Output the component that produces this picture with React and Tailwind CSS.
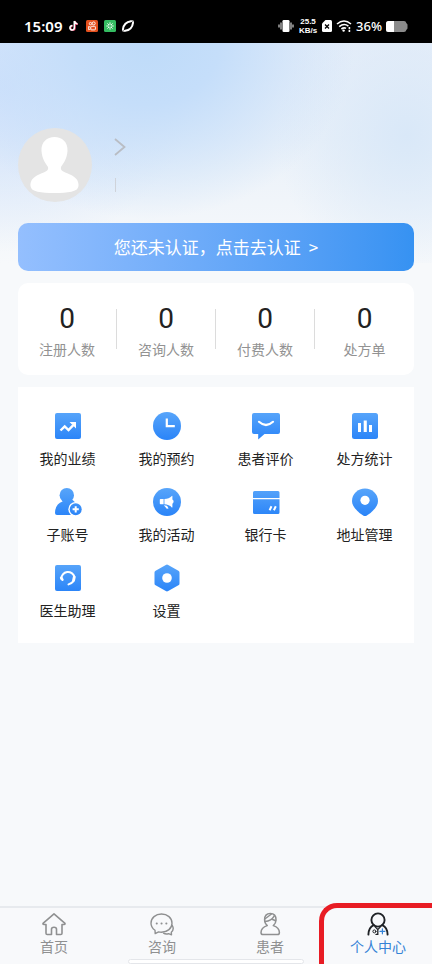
import { useState } from "react"

const stats = [
    { label: "注册人数", value: 0 },
    { label: "咨询人数", value: 0 },
    { label: "付费人数", value: 0 },
    { label: "处方单", value: 0 },
]

const menu = [
    { label: "我的业绩", icon: PerformanceIcon },
    { label: "我的预约", icon: ClockIcon },
    { label: "患者评价", icon: ReviewIcon },
    { label: "处方统计", icon: ChartIcon },
    { label: "子账号", icon: SubAccountIcon },
    { label: "我的活动", icon: ActivityIcon },
    { label: "银行卡", icon: CardIcon },
    { label: "地址管理", icon: PinIcon },
    { label: "医生助理", icon: AssistantIcon },
    { label: "设置", icon: SettingsIcon },
]

const tabs = [
    { label: "首页", icon: HomeIcon },
    { label: "咨询", icon: ChatIcon },
    { label: "患者", icon: PatientIcon },
    { label: "个人中心", icon: DoctorIcon },
]

// shared 28x28 frame with the blue fill used by all menu icons
function MenuSvg({ id, children }){
    return (
        <svg className="w-7 h-7" viewBox="0 0 28 28" fill={`url(#${id})`} aria-hidden="true">
            <defs>
                <linearGradient id={id} gradientUnits="userSpaceOnUse" x1="0" y1="0" x2="0" y2="28">
                    <stop offset="0" stopColor="#58a5fa" />
                    <stop offset="1" stopColor="#2a84f8" />
                </linearGradient>
            </defs>
            {children}
        </svg>
    )
}

function PerformanceIcon(){
    return (
        <MenuSvg id="performance">
            <rect x="1" y="1" width="26" height="26" rx="2" />
            <path d="M6.5 18.5L10.7 14.4L14.5 18L20 12.3" fill="none" stroke="#fff" strokeWidth="2.4" />
            <path d="M15.5 10H22V16.5L19.6 14V12.4H18Z" fill="#fff" />
        </MenuSvg>
    )
}

function ClockIcon(){
    return (
        <MenuSvg id="clock">
            <circle cx="14" cy="14" r="14" />
            <path d="M13.8 6.5V14.2H21.8" fill="none" stroke="#fff" strokeWidth="2.2" />
        </MenuSvg>
    )
}

function ReviewIcon(){
    return (
        <MenuSvg id="review">
            <path d="M2 1H26A2 2 0 0 1 28 3V20A2 2 0 0 1 26 22H12.5L6.2 27.5V22H2A2 2 0 0 1 0 20V3A2 2 0 0 1 2 1Z" />
            <path d="M7 9.8Q14 16.2 21 9.8" fill="none" stroke="#fff" strokeWidth="2.2" strokeLinecap="round" />
        </MenuSvg>
    )
}

function ChartIcon(){
    return (
        <MenuSvg id="chart">
            <rect x="1" y="1" width="26" height="26" rx="2.5" />
            <path d="M7 11H10V20H7ZM12.7 8.5H15.8V20H12.7ZM18 13H21V20H18Z" fill="#fff" />
        </MenuSvg>
    )
}

function SubAccountIcon(){
    return (
        <MenuSvg id="sub-account">
            <circle cx="12.8" cy="7.2" r="7.2" />
            <path d="M8 11H17.6C21 14 24 17 24 22V27H3Q1 27 1 25C1 19 4 15 8.5 13.5Z" />
            <circle cx="21.7" cy="21.3" r="7.4" fill="#fff" />
            <circle cx="21.7" cy="21.3" r="6" />
            <path d="M21.7 18.2V24.4M18.6 21.3H24.8" stroke="#fff" strokeWidth="2" />
        </MenuSvg>
    )
}

function ActivityIcon(){
    return (
        <MenuSvg id="activity">
            <circle cx="14" cy="14" r="14" />
            <path d="M7.5 11H10.6V16.3H7.5Q6.8 16.3 6.8 15.6V11.7Q6.8 11 7.5 11Z" fill="#fff" />
            <path d="M11.4 11C14.5 11 17 9.7 18.8 7.9Q19.4 7.5 19.4 8.3V11.6Q20.6 12.2 20.6 13.6T19.4 15.8V19Q19.4 19.8 18.8 19.4C17 17.6 14.5 16.3 11.4 16.3Z" fill="#fff" />
            <path d="M10.8 17.3L14 17.8L15.6 20.4L13.8 20.8Z" fill="#fff" />
        </MenuSvg>
    )
}

function CardIcon(){
    return (
        <MenuSvg id="card">
            <path d="M2.5 3H26Q27.5 3 27.5 4.5V10H1V4.5Q1 3 2.5 3ZM1 11.3H27.5V24.5Q27.5 26 26 26H2.5Q1 26 1 24.5Z" />
            <path d="M19.5 18.3L17.6 22.3M23.8 18.3L21.9 22.3" stroke="#fff" strokeWidth="2" />
        </MenuSvg>
    )
}

function PinIcon(){
    return (
        <MenuSvg id="pin">
            <path d="M14 0.5C6.8 0.5 1 6 1 13C1 18 4.8 21.6 8.500 25L12.5 27.8Q14 28.4 15.5 27.8L19.500 25C23.200 21.6 27 18 27 13C27 6 21.2 0.5 14 0.5Z" />
            <circle cx="14" cy="12.3" r="4.6" fill="#fff" />
        </MenuSvg>
    )
}

function AssistantIcon(){
    return (
        <MenuSvg id="assistant">
            <rect x="1" y="1" width="26" height="26" rx="2" />
            <path d="M7.3 14.8A6.7 6.7 0 0 1 20.5 13Q20.8 18.5 14.5 20.4" fill="none" stroke="#fff" strokeWidth="2" strokeLinecap="round" />
            <path d="M7.2 13.8L8.4 15.6M20.2 12.8L19.4 16.6" stroke="#fff" strokeWidth="2.6" strokeLinecap="round" />
        </MenuSvg>
    )
}

function SettingsIcon(){
    return (
        <MenuSvg id="settings">
            <path d="M12.8 0.9Q14 0.2 15.2 0.9L25.4 6.7Q26.5 7.3 26.5 8.6V19.4Q26.5 20.7 25.4 21.3L15.2 27.1Q14 27.8 12.8 27.1L2.6 21.3Q1.5 20.7 1.5 19.4V8.6Q1.5 7.3 2.6 6.7Z" />
            <circle cx="14" cy="14" r="4.8" fill="#fff" />
        </MenuSvg>
    )
}

function HomeIcon(){
    return (
        <svg className="w-6 h-6" viewBox="0 0 24 24" fill="none" stroke="currentColor" strokeWidth="1.6" strokeLinejoin="round" aria-hidden="true">
            <path d="M12 1.8L1 11.4Q0.8 12.6 2 12.5H4V21.2Q4 22.5 5.2 22.5H9.5V17.2Q9.5 15.3 12 15.3T14.5 17.2V22.5H18.8Q20 22.5 20 21.2V12.5H22Q23.2 12.6 23 11.4Z" />
        </svg>
    )
}

function ChatIcon(){
    return (
        <svg className="w-6 h-6" viewBox="0 0 24 24" fill="none" stroke="currentColor" strokeWidth="1.4" strokeLinecap="round" strokeLinejoin="round" aria-hidden="true">
            <path d="M11.5 2C5.6 2 1 6 1 11.2C1 14.2 2.6 16.6 5 18.3L5.2 21.6L8.6 19.9C9.5 20.1 10.5 20.2 11.5 20.2C17.4 20.2 22 16.3 22 11.2C22 6 17.4 2 11.5 2Z" />
            <path d="M22.3 13.5C24 16.6 23 18.8 21.3 20.2L21.5 22.8L18.6 21.7C16.5 22.2 14.8 22 13.6 21.2" />
            <path d="M6.7 11.4H6.8M11.5 11.4H11.6M16.3 11.4H16.4" strokeWidth="2" />
        </svg>
    )
}

function PatientIcon(){
    return (
        <svg className="w-6 h-6" viewBox="0 0 24 24" fill="none" stroke="currentColor" strokeWidth="1.5" strokeLinecap="round" strokeLinejoin="round" aria-hidden="true">
            <path d="M9.3 13.6Q6.6 11.4 6.6 7.8C6.6 4 8.6 1.5 12.3 1.5S18 4 18 7.8Q18 11.4 15.3 13.6C19 14.8 21.4 17 21.4 20.5Q21.4 22.6 19.4 22.6H5Q3 22.6 3 20.5C3 17 5.5 14.8 9.3 13.6Z" />
            <path d="M6.8 7L13.5 2M7 9.5C11 9.2 14.5 7 16.5 3.6M13.5 7L17.7 8.8" />
        </svg>
    )
}

function DoctorIcon(){
    return (
        <svg className="w-6 h-6" viewBox="0 0 24 24" fill="none" stroke="#1f2226" strokeWidth="1.9" strokeLinecap="round" aria-hidden="true">
            <circle cx="12" cy="8" r="6.6" />
            <path d="M7.8 13.2C4.5 14.6 2.6 17.5 2.4 22.6M16.2 13.2C19.5 14.6 21.4 17.5 21.6 22.6" />
            <path d="M9 14.6L11.8 17.6L14.6 14.6M11.8 17.6V22.4H10" strokeWidth="1.3" />
            <circle cx="8.4" cy="19.4" r="1.5" strokeWidth="1" />
            <path d="M16.4 16.8V21.8M13.9 19.3H18.9" stroke="#3583d6" strokeWidth="1.2" />
        </svg>
    )
}

function StatusBar(){
    return (
        <div className="h-[43px] pt-[9px] px-6 bg-black text-white font-['Noto_Sans',sans-serif] flex justify-between items-center">
            <div className="flex items-center gap-[6px]">
                <span className="text-[15px] leading-none font-semibold">15:09</span>
                <svg className="w-3 h-3" viewBox="0 0 12 12" fill="none" strokeWidth="1.6" aria-hidden="true">
                    <path d="M7 1V8A2.2 2.2 0 1 1 4.8 5.8M7 1.5Q7.4 4 10 4.2" stroke="#e8446a" />
                    <path d="M6.3 1V7.6A2.2 2.2 0 1 1 4.3 5.6M6.3 1Q7 3.6 9.4 3.8" stroke="#fff" />
                </svg>
                <svg className="w-3 h-3" viewBox="0 0 12 12" aria-hidden="true">
                    <rect width="12" height="12" rx="1.5" fill="#e5501d" />
                    <g fill="none" stroke="#fff" strokeWidth="0.9">
                        <circle cx="4.5" cy="3.6" r="1.2" />
                        <circle cx="7.7" cy="3.4" r="1.5" />
                        <rect x="4.8" y="6.3" width="4.6" height="3.6" rx="0.8" />
                        <path d="M4.6 7.2L2.6 6.5V9.7L4.6 9" />
                    </g>
                </svg>
                <svg className="w-3 h-3" viewBox="0 0 12 12" aria-hidden="true">
                    <rect width="12" height="12" rx="1.5" fill="#35bd62" />
                    <path d="M6 2.3V5M6 7V9.7M2.3 6H5M7 6H9.7M3.4 3.4L5.2 5.2M6.8 6.8L8.6 8.6M8.6 3.4L6.8 5.2M5.2 6.8L3.4 8.6" stroke="#fff" strokeWidth="0.9" />
                </svg>
                <svg className="w-3 h-3" viewBox="0 0 12 12" fill="none" stroke="#fff" strokeLinecap="round" aria-hidden="true">
                    <path d="M1 9.2C1.5 5 4.5 1.8 9 1.2" strokeWidth="2" />
                    <path d="M11 2.8C10.5 7 7.5 10.2 3 10.8" strokeWidth="2" />
                    <path d="M9 1.2L11.2 0.8V2.5M3 10.8L0.8 11.2V9.5" strokeWidth="1" />
                </svg>
            </div>
            <div className="flex items-center gap-1">
                <svg className="w-4 h-3" viewBox="0 0 16 12" fill="#fff" aria-hidden="true">
                    <rect x="4.5" width="7" height="12" rx="1.3" />
                    <path d="M3 2.5V9.5M13 2.5V9.5M1 4.5V7.5M15 4.5V7.5" stroke="#fff" />
                </svg>
                <div className="w-5 text-[8px] leading-[9px] font-bold text-center whitespace-nowrap font-['Liberation_Sans',sans-serif]">
                    <p>25.5</p>
                    <p>KB/s</p>
                </div>
                <svg className="w-[10px] h-3" viewBox="0 0 10 12" aria-hidden="true">
                    <path d="M3.5 0H8.5Q10 0 10 1.5V10.5Q10 12 8.5 12H1.5Q0 12 0 10.5V3.5Z" fill="#fff" />
                    <path d="M3 4.5L7 8.5M7 4.5L3 8.5" stroke="#000" strokeWidth="1.3" />
                </svg>
                <svg className="w-4 h-3" viewBox="0 0 16 12" fill="none" stroke="#fff" strokeWidth="1.6" aria-hidden="true">
                    <path d="M1 4Q8 -2 15 4M3.2 6.7Q8 2.6 12.4 6.2M5.4 9Q8 7 10 8.4" />
                    <circle cx="7.6" cy="10.6" r="1.2" fill="#fff" stroke="none" />
                    <path d="M13.4 7V9.2M13.4 10V12" />
                </svg>
                <span className="text-[13px] leading-none font-medium">36%</span>
                <svg className="w-[22px] h-[11px]" viewBox="0 0 22 11" aria-hidden="true">
                    <path d="M2.5 0H18Q20 0 20.3 2L21.5 3.5V7.5L20.3 9Q20 11 18 11H2.5Q0 11 0 8.5V2.5Q0 0 2.5 0Z" fill="#8b8b8b" />
                    <path d="M2.5 0H8V11H2.5Q0 11 0 8.5V2.5Q0 0 2.5 0Z" fill="#fff" />
                </svg>
            </div>
        </div>
    )
}

function Profile(){
    return (
        <div className="h-[180px] px-[18px] pb-[21px] flex items-end gap-[22px]">
            <svg className="w-[74px] h-[74px]" viewBox="0 0 74 74" role="img" aria-label="头像">
                <circle cx="37" cy="37" r="37" fill="#e4e4e4" />
                <path d="M36.5 9C44 9 50 14 49.5 23C49 31 45 36 43 39C42 43 46 44 52 46.5C58 49 61 53 60.5 58C60 64 50 65 36.5 65S13 64 12.5 58C12 53 15 49 21 46.5C27 44 31 43 30 39C28 36 24 31 23.5 23C23 14 29 9 36.5 9Z" fill="#fff" />
            </svg>
            <div className="h-16 flex flex-col items-start justify-between pb-[10px]">
                <button className="text-[#b9bdc4]" aria-label="个人资料">
                    <svg className="w-3 h-[18px]" viewBox="0 0 12 18" fill="none" stroke="currentColor" strokeWidth="1.8" aria-hidden="true">
                        <path d="M1 1L10.5 9L1 17" />
                    </svg>
                </button>
                <span className="ml-px w-px h-[14px] bg-[#cfd3da]"></span>
            </div>
        </div>
    )
}

export default function App(){
    const [activeTab, setActiveTab] = useState("个人中心")

    return (
        <div className="min-h-screen flex flex-col bg-[#f7f9fb] text-[#222] font-['Noto_Sans_CJK_SC',sans-serif]">
            <StatusBar />
            <main className="grow pb-6 bg-no-repeat bg-[length:100%_220px] bg-[radial-gradient(ellipse_48%_80%_at_34%_0%,#bedbf9_0%,#c5defa_35%,transparent_100%),radial-gradient(ellipse_30%_65%_at_94%_42%,#d9e8f8_0%,transparent_100%),radial-gradient(ellipse_45%_75%_at_0%_20%,#cfe1fb_0%,transparent_100%),linear-gradient(#e6eef9_0%,#eaf1f9_45%,#f7f9fb_100%)]">
                <Profile />
                <div className="px-[18px] flex flex-col gap-3">
                    <button className="h-12 rounded-[10px] bg-linear-to-r from-[#94bffe] to-[#3692f2] text-white text-[17px] leading-6 flex justify-center items-center gap-2">
                        <span>您还未认证，点击去认证</span>
                        <span>&gt;</span>
                    </button>

                    <section className="h-[92px] rounded-[10px] bg-white grid grid-cols-4 items-center">
                        {stats.map((stat) => (
                            <div key={stat.label} className="h-10 border-r border-[#dcdcdc] last:border-r-0 flex flex-col items-center justify-center">
                                <span className="text-[28px] leading-10 font-[Roboto,sans-serif]">{stat.value}</span>
                                <span className="text-sm leading-5 text-[#929292]">{stat.label}</span>
                            </div>
                        ))}
                    </section>

                    <section className="pt-[25px] pb-[23px] bg-white grid grid-cols-4 gap-y-5">
                        {menu.map(({ label, icon: Icon }) => (
                            <button key={label} className="flex flex-col items-center gap-2">
                                <Icon />
                                <span className="text-sm leading-5">{label}</span>
                            </button>
                        ))}
                    </section>
                </div>
            </main>

            <nav className="relative h-[58px] border-t-2 border-[#e7eaee] bg-[#f8f9fb] grid grid-cols-4">
                {tabs.map(({ label, icon: Icon }) => (
                    <button
                        key={label}
                        className={`pt-1 flex flex-col items-center ${activeTab === label ? 'text-[#3583d6]' : 'text-[#8f9091]'}`}
                        onClick={()=>setActiveTab(label)}
                    >
                        <Icon />
                        <span className="text-sm leading-5">{label}</span>
                    </button>
                ))}
                <div className="absolute bottom-0 left-1/2 -translate-x-1/2 w-[176px] h-[5px] rounded-full bg-white border border-[#e4e6ea]"></div>
                <div className="absolute -top-[5px] bottom-0 right-0 w-[113px] rounded-tl-[18px] border-t-[5px] border-l-[5px] border-[#e81c24] pointer-events-none"></div>
            </nav>
        </div>
    )
}
